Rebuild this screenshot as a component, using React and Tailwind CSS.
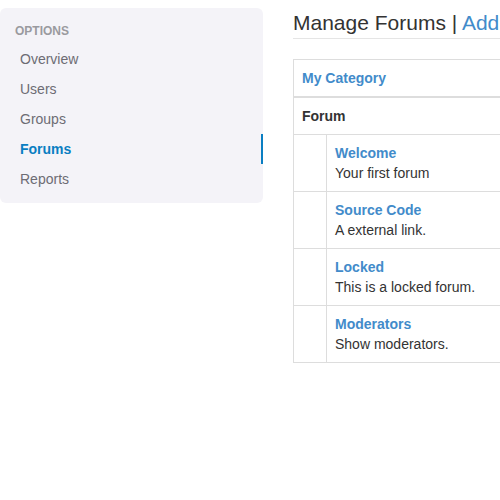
const navItems = ['Overview', 'Users', 'Groups', 'Forums', 'Reports'];

const forums = [
  { name: 'Welcome', desc: 'Your first forum' },
  { name: 'Source Code', desc: 'A external link.' },
  { name: 'Locked', desc: 'This is a locked forum.' },
  { name: 'Moderators', desc: 'Show moderators.' },
];

function Sidebar() {
  return (
    <div className="mt-2 w-[263px] shrink-0 self-start rounded-md bg-[#f4f3f8] pt-[15px] pb-[9px]">
      <div className="pl-[15px] text-[12px] font-bold leading-4 uppercase text-[#9a9a9f]">Options</div>
      <ul className="mt-[5px]">
        {navItems.map((item) => {
          const active = item === 'Forums';
          return (
            <li
              key={item}
              className={
                active
                  ? 'h-[30px] pl-5 text-[14px] leading-[30px] font-bold text-[#0a7ec2] border-r-2 border-[#0a7ec2]'
                  : 'h-[30px] pl-5 text-[14px] leading-[30px] text-[#6d6c74]'
              }
            >
              {item}
            </li>
          );
        })}
      </ul>
    </div>
  );
}

export default function App() {
  return (
    <div className="flex w-[500px] h-[500px] overflow-hidden bg-white font-['Liberation_Sans',Arial,sans-serif] text-[#333]">
      <Sidebar />
      <div className="ml-[30px] shrink-0 w-[640px]">
        <h1 className="mt-[9px] pb-px border-b border-[#e5e5e5] text-[21px] leading-[28px] font-normal text-[#333]">
          Manage Forums | <a className="text-[#428bca]">Add</a>
        </h1>
        <table className="mt-5 w-full border-collapse text-[14px] leading-5">
          <thead>
            <tr>
              <th colSpan={2} className="border border-[#ddd] border-b-2 px-2 py-2 text-left font-bold text-[#428bca]">
                My Category
              </th>
            </tr>
            <tr>
              <th colSpan={2} className="border border-[#ddd] px-2 py-2 text-left font-bold text-[#333]">
                Forum
              </th>
            </tr>
          </thead>
          <tbody>
            {forums.map((f) => (
              <tr key={f.name}>
                <td className="w-[33px] border border-[#ddd]"></td>
                <td className="border border-[#ddd] px-2 py-2">
                  <div className="font-bold text-[#428bca]">{f.name}</div>
                  <div>{f.desc}</div>
                </td>
              </tr>
            ))}
          </tbody>
        </table>
      </div>
    </div>
  );
}
